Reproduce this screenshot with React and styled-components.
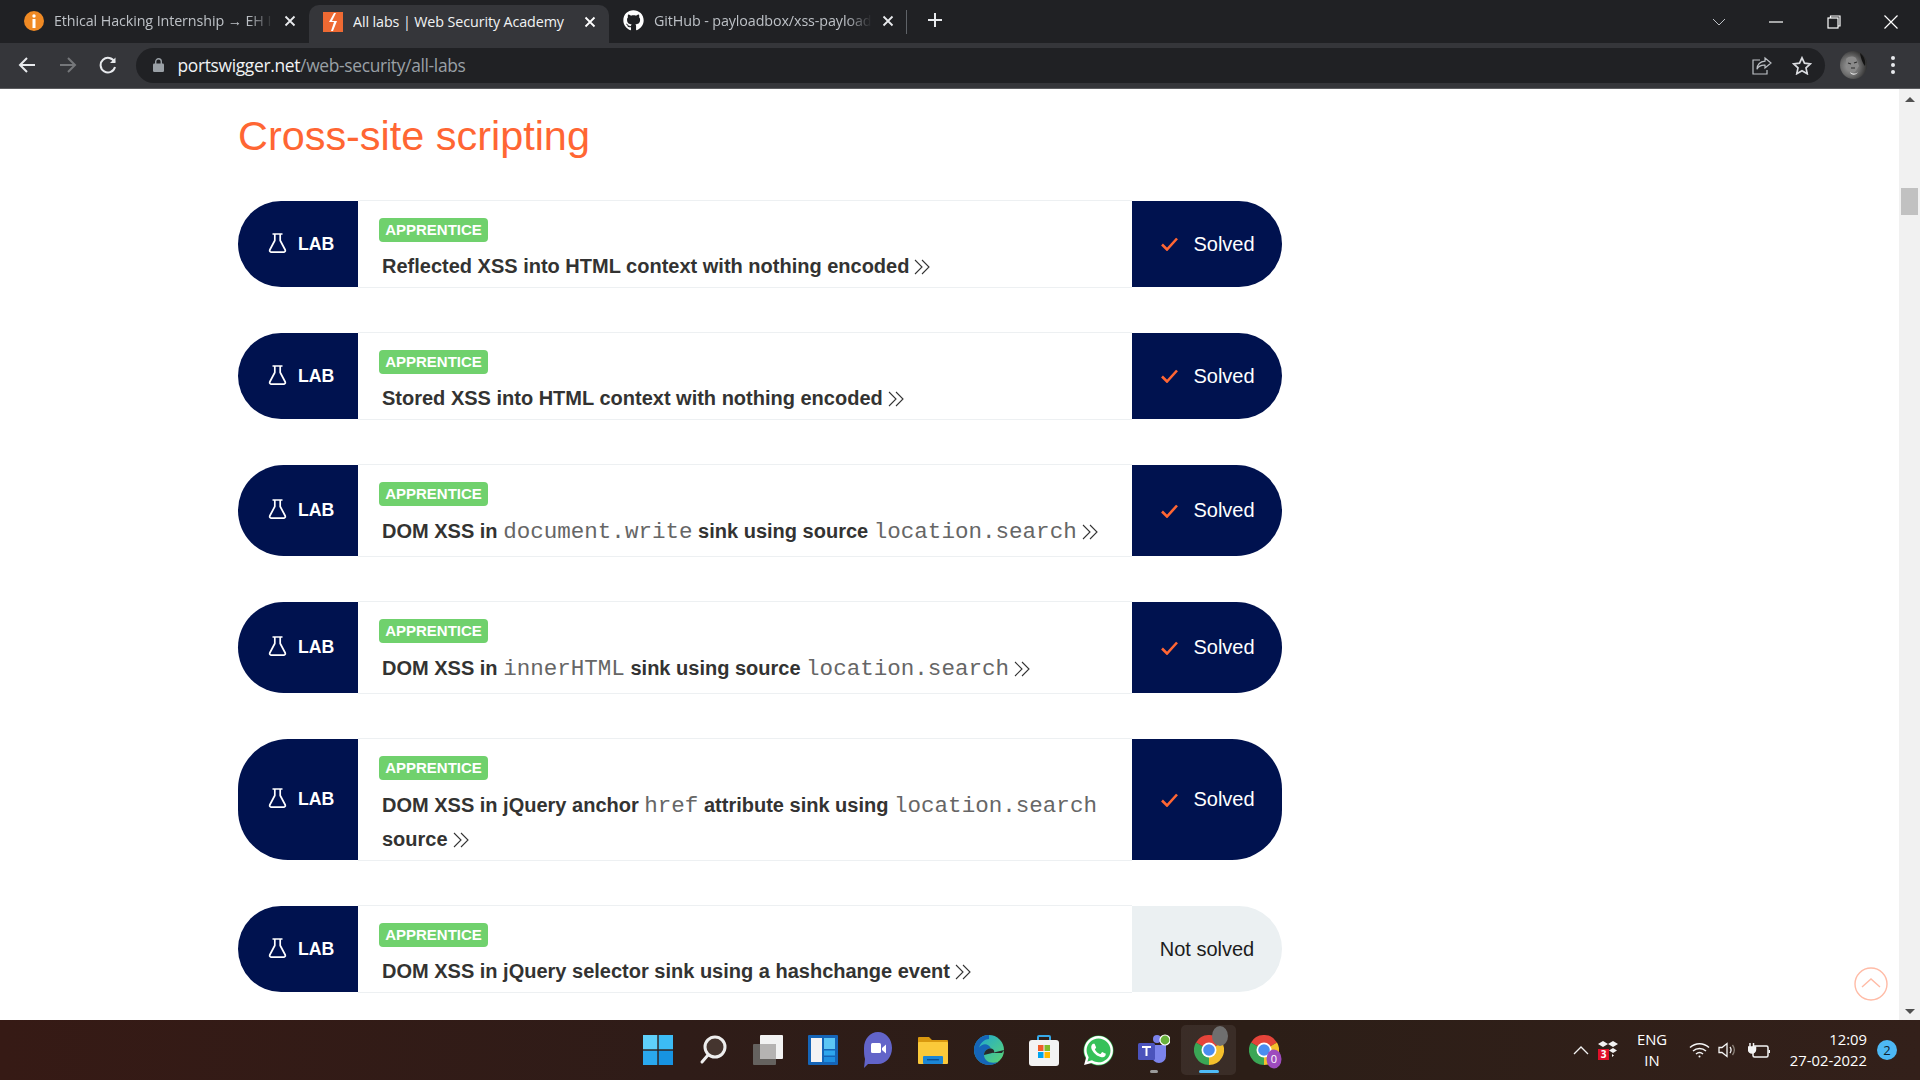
import React from 'react';
import styled, { createGlobalStyle } from 'styled-components';
import { FaGithub, FaWhatsapp } from 'react-icons/fa';

const GlobalStyle = createGlobalStyle`
  html, body { margin: 0; padding: 0; height: 100%; overflow: hidden; background: #fff; }
  body { font-family: "Liberation Sans", Arial, sans-serif; }
  * { box-sizing: border-box; }
`;

const Screen = styled.div`
  width: 1920px;
  height: 1080px;
  display: flex;
  flex-direction: column;
  position: relative;
  overflow: hidden;
`;

/* browser chrome */
const TabStrip = styled.div`
  height: 43px;
  background: #202124;
  display: flex;
  align-items: flex-end;
  padding-left: 12px;
  flex-shrink: 0;
`;

const Tab = styled.div`
  width: ${p => p.$width}px;
  height: ${p => (p.$active ? 38 : 36)}px;
  display: flex;
  align-items: center;
  gap: 10px;
  padding: 0 13px ${p => (p.$active ? 5 : 3)}px 14px;
  margin-bottom: ${p => (p.$active ? 0 : 3)}px;
  background: ${p => (p.$active ? '#35363a' : 'transparent')};
  border-radius: 10px 10px 0 0;
  color: ${p => (p.$active ? '#f1f3f4' : '#bdc1c6')};
  font-family: "Open Sans", sans-serif;
  font-size: 14.3px;
  position: relative;
`;

const TabTitle = styled.span`
  flex: 1;
  white-space: nowrap;
  overflow: hidden;
  letter-spacing: -0.1px;
  ${p => !p.$active && `
    -webkit-mask-image: linear-gradient(90deg, #000 88%, transparent 100%);
    mask-image: linear-gradient(90deg, #000 88%, transparent 100%);
  `}
`;

const TabDivider = styled.span`
  width: 1px;
  height: 24px;
  background: #5f6368;
  margin: 0 0 9px -1px;
`;

const NewTab = styled.span`
  width: 56px;
  height: 36px;
  display: flex;
  align-items: center;
  justify-content: center;
  margin-bottom: 5px;
`;

const WindowControls = styled.div`
  margin-left: auto;
  height: 43px;
  display: flex;
  align-items: center;
`;

const WindowButton = styled.span`
  width: 57.5px;
  height: 36px;
  display: flex;
  align-items: center;
  justify-content: center;
`;

const Toolbar = styled.div`
  height: 46px;
  background: #35363a;
  border-bottom: 1px solid #5b5c5f;
  display: flex;
  align-items: center;
  padding: 0 0 1px 7px;
  flex-shrink: 0;
`;

const NavButton = styled.span`
  width: 40.5px;
  height: 36px;
  display: flex;
  align-items: center;
  justify-content: center;
`;

const UrlBar = styled.div`
  width: 1689px;
  height: 35px;
  margin-left: 7px;
  background: #202124;
  border-radius: 18px;
  display: flex;
  align-items: center;
  padding: 0 3px 0 17px;
`;

const UrlText = styled.span`
  margin-left: 14px;
  font-family: "Open Sans", sans-serif;
  font-size: 17.4px;
  letter-spacing: -0.33px;
  color: #f1f3f4;
  flex: 1;
  b { font-weight: 400; color: #9aa0a6; }
`;

const UrlAction = styled.span`
  width: 40px;
  display: flex;
  justify-content: center;
`;

const AvatarWrap = styled.span`
  width: 27px;
  height: 28px;
  margin-left: 15px;
  display: flex;
`;

const MenuDots = styled.span`
  margin-left: 24px;
  display: flex;
  flex-direction: column;
  gap: 3px;
  i { width: 4px; height: 4px; border-radius: 50%; background: #e8eaed; display: block; }
`;

/* page */
const Viewport = styled.div`
  flex: 1;
  display: flex;
  min-height: 0;
  position: relative;
`;

const Content = styled.main`
  flex: 1;
  padding-left: 238px;
`;

const Column = styled.div`
  width: 1044px;
`;

const Heading = styled.h1`
  margin: 23px 0 39px;
  font-size: 41.4px;
  line-height: 49px;
  font-weight: 400;
  color: #ff6633;
`;

const LabList = styled.div`
  display: flex;
  flex-direction: column;
  gap: 44px;
`;

const Row = styled.div`
  display: flex;
  align-items: stretch;
`;

const LabCell = styled.div`
  width: 120px;
  margin: 1px 0;
  background: #00124f;
  border-radius: 50px 0 0 50px;
  display: flex;
  align-items: center;
  padding-left: 30px;
  gap: 11px;
  color: #fff;
  font-weight: 700;
  font-size: 17.7px;
  flex-shrink: 0;
`;

const FlaskWrap = styled.span`
  display: flex;
  margin-bottom: 3px;
`;

const LabBody = styled.div`
  flex: 1;
  border-top: 1px solid #edf0f2;
  border-bottom: 1px solid #edf0f2;
  padding: 17px 24px 6px 21px;
`;

const Badge = styled.span`
  display: block;
  width: 109px;
  height: 24px;
  border-radius: 4px;
  background: #70d16d;
  color: #fff;
  font-size: 15px;
  font-weight: 700;
  line-height: 24px;
  text-align: center;
`;

const LabTitle = styled.div`
  margin: 9px 0 0 3px;
  font-size: 20px;
  font-weight: 700;
  line-height: 30px;
  color: #333332;
`;

const Code = styled.code`
  display: inline-block;
  padding: 2px 0 3px;
  font-family: "Liberation Mono", monospace;
  font-size: 22.55px;
  font-weight: 400;
  color: #666;
`;

const Status = styled.div`
  width: 150px;
  margin: 1px 0;
  flex-shrink: 0;
  border-radius: 0 50px 50px 0;
  background: ${p => (p.$solved ? '#00124f' : '#ebf0f2')};
  color: ${p => (p.$solved ? '#fff' : '#1c1c1c')};
  display: flex;
  align-items: center;
  justify-content: center;
  gap: 15px;
  font-size: 20px;
  padding-left: ${p => (p.$solved ? 2 : 0)}px;
`;

const Scrollbar = styled.aside`
  width: 21px;
  background: #f1f1f1;
  position: relative;
  display: flex;
  flex-direction: column;
  align-items: center;
  justify-content: space-between;
  padding: 8px 0 6px;
`;

const ScrollThumb = styled.span`
  position: absolute;
  top: 99px;
  left: 2px;
  width: 17px;
  height: 27px;
  background: #c1c1c1;
`;

const Arrow = styled.span`
  width: 0;
  height: 0;
  border-left: 5px solid transparent;
  border-right: 5px solid transparent;
  ${p => (p.$down ? 'border-top: 5px solid #505050;' : 'border-bottom: 5px solid #505050;')}
`;

const BackToTop = styled.span`
  position: absolute;
  right: 32px;
  top: 878px;
  width: 34px;
  height: 34px;
`;

/* taskbar */
const Taskbar = styled.footer`
  height: 60px;
  flex-shrink: 0;
  background: linear-gradient(90deg, #361a15 0%, #2f1c18 35%, #2c1e17 65%, #33201a 100%);
  display: grid;
  grid-template-columns: 1fr auto 1fr;
  align-items: center;
  color: #fff;
  font-family: "Open Sans", sans-serif;
`;

const TaskIcons = styled.div`
  grid-column: 2;
  display: flex;
  align-items: center;
  justify-content: center;
  padding-left: 2px;
`;

const TaskIcon = styled.span`
  width: 55.1px;
  height: 50px;
  display: flex;
  align-items: center;
  justify-content: center;
  border-radius: 5px;
  position: relative;
  background: ${p => (p.$current ? 'rgba(255,255,255,0.07)' : 'transparent')};
  &::after {
    content: '';
    display: ${p => (p.$indicator ? 'block' : 'none')};
    position: absolute;
    bottom: 2px;
    left: 50%;
    transform: translateX(-50%);
    height: 3px;
    border-radius: 2px;
    width: ${p => (p.$indicator === 'active' ? 20 : 8)}px;
    background: ${p => (p.$indicator === 'active' ? '#4fbcf7' : '#9b9b9b')};
  }
`;

const Tray = styled.div`
  grid-column: 3;
  display: flex;
  align-items: center;
  justify-content: flex-end;
  padding-right: 23px;
`;

const TrayItem = styled.span`
  display: flex;
  align-items: center;
  justify-content: center;
  width: ${p => p.$width}px;
  margin-left: ${p => p.$gap || 0}px;
  position: relative;
`;

const DropCount = styled.span`
  position: absolute;
  left: 0;
  top: 9px;
  width: 11px;
  height: 11px;
  background: #e0102a;
  color: #fff;
  font-size: 10px;
  line-height: 11px;
  text-align: center;
  font-weight: 700;
`;

const LangBlock = styled.span`
  width: 50px;
  margin-left: 9px;
  text-align: center;
  font-size: 14.8px;
  line-height: 21px;
`;

const Clock = styled.span`
  width: 88px;
  text-align: right;
  font-size: 14.8px;
  line-height: 21px;
  margin-left: 3px;
`;

const NotifyBadge = styled.span`
  width: 20px;
  height: 20px;
  margin-left: 10px;
  border-radius: 50%;
  background: #4db8f5;
  color: #10202b;
  font-size: 13px;
  line-height: 20px;
  text-align: center;
`;

/* drawings */
const FlaskIcon = () => (
  <svg width="19" height="20" viewBox="0 0 19 20" fill="none" stroke="#fff" strokeWidth="1.7" strokeLinejoin="round">
    <path d="M4.500 1h10M6.800 1v6.500L2 16.500c-.8 1.500 0 2.700 1.600 2.700h11.800c1.600 0 2.400-1.200 1.600-2.700L12.200 7.500V1" />
  </svg>
);

const DoubleChevron = () => (
  <svg width="17" height="16" viewBox="0 0 17 16" fill="none" stroke="#333" strokeWidth="1.1" style={{ marginLeft: 5, verticalAlign: -2 }}>
    <path d="M1 1l7 7-7 7M8 1l7 7-7 7" />
  </svg>
);

const CheckIcon = () => (
  <svg width="17" height="14" viewBox="0 0 17 14" fill="none" stroke="#ff6633" strokeWidth="2.6">
    <path d="M1 7.500l5 5L16 1.500" />
  </svg>
);

const Close = ({ color = '#e8eaed' }) => (
  <svg width="12" height="12" viewBox="0 0 12 12" stroke={color} strokeWidth="1.8" style={{ flexShrink: 0 }}>
    <path d="M1.500 1.500l9 9M10.500 1.500l-9 9" />
  </svg>
);

const InfoFavicon = () => (
  <svg width="20" height="20" viewBox="0 0 20 20" style={{ flexShrink: 0, marginLeft: -2 }}>
    <circle cx="10" cy="10" r="10" fill="#f08a24" />
    <circle cx="10" cy="5" r="1.700" fill="#fff" />
    <rect x="8.500" y="8" width="3" height="9" fill="#fff" />
  </svg>
);

const BoltFavicon = () => (
  <svg width="20" height="20" viewBox="0 0 20 20" style={{ flexShrink: 0 }}>
    <rect width="20" height="20" fill="#ee6a33" />
    <path d="M11 1L6 10h5l-3 9 2 0 4-10H9l4-8z" fill="#fff" />
  </svg>
);

const LionAvatar = () => (
  <svg width="27" height="28" viewBox="0 0 27 28">
    <defs>
      <radialGradient id="lionFur" cx="0.38" cy="0.55" r="0.7">
        <stop offset="0" stopColor="#a2a2a2" />
        <stop offset="0.5" stopColor="#6b6b6b" />
        <stop offset="1" stopColor="#1e1e1e" />
      </radialGradient>
    </defs>
    <ellipse cx="13.500" cy="14" rx="13.500" ry="14" fill="url(#lionFur)" />
    <path d="M20 2c4 3 6 8 5 13-2-2-4-7-5-13z" fill="#141414" />
    <path d="M6 8c3-3 7-3 10-1l3 8-4 6c-3 1-6 0-8-3z" fill="#8a8a8a" />
    <path d="M10 21c3 2 6 2 8 0-1 3-7 4-8 0z" fill="#e6e6e6" />
    <path d="M8 12l3 1M14 12l3-1M11 17h4" stroke="#2c2c2c" strokeWidth="1.200" fill="none" />
  </svg>
);

const ChromeIcon = ({ size = 30, children }) => (
  <span style={{ position: 'relative', display: 'inline-flex' }}>
    <svg width={size} height={size} viewBox="0 0 30 30">
      <path d="M15 15L2 7.500A15 15 0 0 1 28 7.500z" fill="#e5443a" />
      <path d="M15 15L28 7.500A15 15 0 0 1 15 30z" fill="#f5c02c" />
      <path d="M15 15L15 30A15 15 0 0 1 2 7.500z" fill="#3aa655" />
      <circle cx="15" cy="15" r="7.500" fill="#fff" />
      <circle cx="15" cy="15" r="5.800" fill="#4b8df0" />
    </svg>
    {children}
  </span>
);

const labs = [
  { title: ['Reflected XSS into HTML context with nothing encoded'], solved: true },
  { title: ['Stored XSS into HTML context with nothing encoded'], solved: true },
  { title: ['DOM XSS in ', { code: 'document.write' }, ' sink using source ', { code: 'location.search' }], solved: true },
  { title: ['DOM XSS in ', { code: 'innerHTML' }, ' sink using source ', { code: 'location.search' }], solved: true },
  { title: ['DOM XSS in jQuery anchor ', { code: 'href' }, ' attribute sink using ', { code: 'location.search' }, ' source'], solved: true },
  { title: ['DOM XSS in jQuery selector sink using a hashchange event'], solved: false },
];

const LabRow = ({ lab }) => (
  <Row>
    <LabCell>
      <FlaskWrap>
        <FlaskIcon />
      </FlaskWrap>
      <span>LAB</span>
    </LabCell>
    <LabBody>
      <Badge>APPRENTICE</Badge>
      <LabTitle>
        {lab.title.map((part, i) =>
          typeof part === 'string' ? <span key={i}>{part}</span> : <Code key={i}>{part.code}</Code>
        )}
        <DoubleChevron />
      </LabTitle>
    </LabBody>
    <Status $solved={lab.solved}>
      {lab.solved && <CheckIcon />}
      <span>{lab.solved ? 'Solved' : 'Not solved'}</span>
    </Status>
  </Row>
);

export default function App() {
  return (
    <Screen>
      <GlobalStyle />
      <TabStrip>
        <Tab $width={297}>
          <InfoFavicon />
          <TabTitle>Ethical Hacking Internship → EH I</TabTitle>
          <Close />
        </Tab>
        <Tab $width={300} $active>
          <BoltFavicon />
          <TabTitle $active>All labs | Web Security Academy</TabTitle>
          <Close color="#fff" />
        </Tab>
        <Tab $width={298}>
          <FaGithub size={21} color="#fff" style={{ flexShrink: 0 }} />
          <TabTitle>GitHub - payloadbox/xss-payload-list</TabTitle>
          <Close />
        </Tab>
        <TabDivider />
        <NewTab>
          <svg width="16" height="16" viewBox="0 0 16 16" stroke="#e8eaed" strokeWidth="2">
            <path d="M8 1v14M1 8h14" />
          </svg>
        </NewTab>
        <WindowControls>
          <WindowButton>
            <svg width="14" height="8" viewBox="0 0 14 8" fill="none" stroke="#bdc1c6" strokeWidth="1">
              <path d="M1 1l6 6 6-6" />
            </svg>
          </WindowButton>
          <WindowButton>
            <svg width="14" height="2" viewBox="0 0 14 2" stroke="#fff" strokeWidth="1.200">
              <path d="M0 1h14" />
            </svg>
          </WindowButton>
          <WindowButton>
            <svg width="14" height="14" viewBox="0 0 14 14" fill="none" stroke="#fff" strokeWidth="1.200">
              <rect x="1" y="3" width="10" height="10" />
              <path d="M3.500 3V1H13v10h-2" />
            </svg>
          </WindowButton>
          <WindowButton>
            <svg width="14" height="14" viewBox="0 0 14 14" stroke="#fff" strokeWidth="1.200">
              <path d="M0.500 0.500l13 13M13.500 0.500l-13 13" />
            </svg>
          </WindowButton>
        </WindowControls>
      </TabStrip>
      <Toolbar>
        <NavButton>
          <svg width="18" height="18" viewBox="0 0 18 18" fill="none" stroke="#e8eaed" strokeWidth="2">
            <path d="M17 9H2M9 2L2 9l7 7" />
          </svg>
        </NavButton>
        <NavButton>
          <svg width="18" height="18" viewBox="0 0 18 18" fill="none" stroke="#75777a" strokeWidth="2">
            <path d="M1 9h15M9 2l7 7-7 7" />
          </svg>
        </NavButton>
        <NavButton>
          <svg width="18" height="18" viewBox="0 0 18 18" fill="none" stroke="#e8eaed" strokeWidth="2">
            <path d="M15.500 6A7.300 7.300 0 1 0 16 11" />
            <path d="M16.500 1.500V7H11" fill="#e8eaed" stroke="none" />
          </svg>
        </NavButton>
        <UrlBar>
          <svg width="11" height="14" viewBox="0 0 11 14">
            <rect y="5.500" width="11" height="8.500" rx="1.200" fill="#9aa0a6" />
            <path d="M2.700 6V3.600a2.800 2.800 0 0 1 5.600 0V6" fill="none" stroke="#9aa0a6" strokeWidth="1.400" />
          </svg>
          <UrlText>
            portswigger.net<b>/web-security/all-labs</b>
          </UrlText>
          <UrlAction>
            <svg width="20" height="19" viewBox="0 0 20 19" fill="none" stroke="#bdc1c6" strokeWidth="1.200">
              <path d="M13 2l6 5-6 5V9.200c-4-.2-6.500 1-8 4 .3-4.600 3-7.600 8-8z" />
              <path d="M8 4H1v14h14v-4" />
            </svg>
          </UrlAction>
          <UrlAction>
            <svg width="20" height="19" viewBox="0 0 20 19" fill="none" stroke="#dadce0" strokeWidth="1.700">
              <path d="M10 1.800l2.500 5.400 5.800.7-4.300 4 1.200 5.800-5.200-3-5.200 3 1.200-5.800-4.300-4 5.800-.7z" />
            </svg>
          </UrlAction>
        </UrlBar>
        <AvatarWrap>
          <LionAvatar />
        </AvatarWrap>
        <MenuDots>
          <i />
          <i />
          <i />
        </MenuDots>
      </Toolbar>
      <Viewport>
        <Content>
          <Column>
            <Heading>Cross-site scripting</Heading>
            <LabList>
              {labs.map((lab, i) => (
                <LabRow key={i} lab={lab} />
              ))}
            </LabList>
          </Column>
        </Content>
        <Scrollbar>
          <Arrow />
          <ScrollThumb />
          <Arrow $down />
        </Scrollbar>
        <BackToTop>
          <svg width="34" height="34" viewBox="0 0 34 34" fill="none" stroke="#ffbba6" strokeWidth="1.400">
            <circle cx="17" cy="17" r="16" />
            <path d="M8 20l9-8 9 8" />
          </svg>
        </BackToTop>
      </Viewport>
      <Taskbar>
        <TaskIcons>
          <TaskIcon>
            <svg width="30" height="30" viewBox="0 0 30 30">
              <rect width="14.300" height="14.300" fill="#5fd0fa" />
              <rect x="15.700" width="14.300" height="14.300" fill="#3cbcf5" />
              <rect y="15.700" width="14.300" height="14.300" fill="#2aa8ee" />
              <rect x="15.700" y="15.700" width="14.300" height="14.300" fill="#1793e2" />
            </svg>
          </TaskIcon>
          <TaskIcon>
            <svg width="28" height="30" viewBox="0 0 28 30" fill="none" stroke="#eee" strokeWidth="3">
              <circle cx="16" cy="12" r="10" fill="#45352f" />
              <path d="M9 20l-6 7" strokeLinecap="round" />
            </svg>
          </TaskIcon>
          <TaskIcon>
            <svg width="30" height="30" viewBox="0 0 30 30">
              <rect x="7" y="0" width="23" height="24" rx="1" fill="#f2f2f2" />
              <rect x="0" y="9" width="23" height="21" rx="1" fill="#6a6866" fillOpacity="0.92" />
              <rect x="7" y="9" width="16" height="15" fill="#b5b3b2" />
            </svg>
          </TaskIcon>
          <TaskIcon>
            <svg width="30" height="30" viewBox="0 0 30 30">
              <rect width="30" height="30" rx="1" fill="#1565b8" />
              <rect x="3" y="3" width="11" height="24" fill="#f4f4f4" />
              <rect x="16" y="3" width="11" height="11" fill="#5cc6f5" />
              <rect x="16" y="15.500" width="11" height="5" fill="#2ea7ee" />
              <rect x="16" y="22" width="11" height="5" fill="#1e8fe0" />
            </svg>
          </TaskIcon>
          <TaskIcon>
            <svg width="30" height="36" viewBox="0 0 30 36">
              <path d="M15 0c8 0 14 7 14 16s-6 16-14 16H5l-4 4 1-9C1 24 1 20 1 16 1 7 7 0 15 0z" fill="#6264c9" />
              <rect x="8" y="11" width="10" height="10" rx="1.500" fill="#fff" />
              <path d="M19 16l4-3.500v9L19 18z" fill="#fff" />
            </svg>
          </TaskIcon>
          <TaskIcon>
            <svg width="30" height="28" viewBox="0 0 30 28">
              <path d="M0 2a1 1 0 0 1 1-1h10l3 3h15a1 1 0 0 1 1 1v4H0z" fill="#d9980f" />
              <rect y="6" width="30" height="22" rx="1" fill="#fbc93a" />
              <rect x="5" y="20" width="20" height="8" rx="1" fill="#1b86d6" />
              <rect x="9" y="23" width="12" height="1.400" fill="#0b4f91" />
            </svg>
          </TaskIcon>
          <TaskIcon>
            <svg width="30" height="30" viewBox="0 0 30 30">
              <defs>
                <linearGradient id="edgeTop" x1="0" y1="0" x2="1" y2="1">
                  <stop offset="0" stopColor="#1aa5d8" />
                  <stop offset="1" stopColor="#5ed66f" />
                </linearGradient>
              </defs>
              <circle cx="15" cy="15" r="15" fill="url(#edgeTop)" />
              <path d="M15 0C6.700 0 0 6.700 0 15c0 8.300 6.700 15 15 15 3.500 0 6.500-1.200 9-3-8 2.500-14-1.500-14-7 0-4.500 4-7 7-6.500-3-6-9-5-12-1C7 7 11 4 15 4z" fill="#1565b8" />
              <path d="M10 20c0-4.500 4-7 7-6.500 3 .5 4 3 2.500 4.500h8.500c1-2 2-2 2-3" fill="#28292a" />
            </svg>
          </TaskIcon>
          <TaskIcon>
            <svg width="30" height="32" viewBox="0 0 30 32">
              <path d="M9 7V3a1 1 0 0 1 1-1h10a1 1 0 0 1 1 1v4" fill="none" stroke="#37a9e8" strokeWidth="2" />
              <rect y="6" width="30" height="26" rx="3" fill="#f3f3f3" />
              <rect x="9" y="11" width="5.500" height="6" fill="#ef5c2b" />
              <rect x="15.500" y="11" width="5.500" height="6" fill="#7fba2a" />
              <rect x="9" y="18" width="5.500" height="6" fill="#00a4ef" />
              <rect x="15.500" y="18" width="5.500" height="6" fill="#ffb900" />
            </svg>
          </TaskIcon>
          <TaskIcon>
            <FaWhatsapp size={33} color="#fff" style={{ background: 'radial-gradient(circle, #35c15a 62%, transparent 66%)' }} />
          </TaskIcon>
          <TaskIcon $indicator="open">
            <svg width="32" height="32" viewBox="0 0 32 32">
              <circle cx="19" cy="5" r="4" fill="#7b83eb" />
              <path d="M13 11h15v11a7 7 0 0 1-14 0z" fill="#7b83eb" />
              <rect x="0" y="9" width="17" height="17" rx="1.500" fill="#4b53bc" />
              <path d="M4 13h9M8.500 13v9" stroke="#fff" strokeWidth="2" />
              <circle cx="27" cy="6" r="5" fill="#69b23c" stroke="#fff" strokeWidth="1.200" />
            </svg>
          </TaskIcon>
          <TaskIcon $current $indicator="active">
            <ChromeIcon>
              <svg width="16" height="20" viewBox="0 0 16 20" style={{ position: 'absolute', right: -4, top: -9 }}>
                <ellipse cx="8" cy="10" rx="8" ry="10" fill="#6f6f6f" />
              </svg>
            </ChromeIcon>
          </TaskIcon>
          <TaskIcon>
            <ChromeIcon>
              <svg width="16" height="20" viewBox="0 0 16 20" style={{ position: 'absolute', right: -3, bottom: -4 }}>
                <ellipse cx="8" cy="10" rx="7.500" ry="9.500" fill="#9d4bbd" />
                <text x="8" y="14" fontSize="11" fontFamily="Open Sans" textAnchor="middle" fill="#fff">0</text>
              </svg>
            </ChromeIcon>
          </TaskIcon>
        </TaskIcons>
        <Tray>
          <TrayItem $width={28}>
            <svg width="16" height="9" viewBox="0 0 16 9" fill="none" stroke="#f2f2f2" strokeWidth="1.300">
              <path d="M1 8l7-7 7 7" />
            </svg>
          </TrayItem>
          <TrayItem $width={20} $gap={3}>
            <svg width="20" height="20" viewBox="0 0 20 20" fill="#f2f2f2">
              <path d="M5 1l5 3-5 3-5-3zM15 1l5 3-5 3-5-3zM15 8l4 2.500-4 2.500-4-2.500zM14 14l2 1.500-2 1.500z" />
            </svg>
            <DropCount>3</DropCount>
          </TrayItem>
          <LangBlock>
            ENG
            <br />
            IN
          </LangBlock>
          <TrayItem $width={30} $gap={7}>
            <svg width="21" height="16" viewBox="0 0 21 16" fill="none" stroke="#f5f5f5" strokeWidth="1.500">
              <path d="M1 5.500c5.500-5 13.500-5 19 0M4 9c3.800-3.300 9.200-3.300 13 0M7 12c2-1.600 5-1.600 7 0" />
              <circle cx="10.500" cy="14.500" r="1" fill="#f5f5f5" stroke="none" />
            </svg>
          </TrayItem>
          <TrayItem $width={28}>
            <svg width="20" height="16" viewBox="0 0 20 16" fill="none" stroke="#f5f5f5" strokeWidth="1.300">
              <path d="M1 5.500h3l5-4v13l-5-4H1z" />
              <path d="M12 5c1.300 1.800 1.300 4.200 0 6" />
              <path d="M14.500 3c2.200 3 2.200 7 0 10" stroke="#8a8078" />
            </svg>
          </TrayItem>
          <TrayItem $width={34}>
            <svg width="22" height="17" viewBox="0 0 22 17" fill="none" stroke="#f5f5f5" strokeWidth="1.500">
              <rect x="5" y="4" width="15" height="11" rx="1.500" />
              <path d="M21.300 8v3M2 1v4M5.500 1v4" />
              <path d="M0.500 5h7v2.500a3.500 3.500 0 0 1-7 0z" fill="#f5f5f5" />
            </svg>
          </TrayItem>
          <Clock>
            12:09
            <br />
            27-02-2022
          </Clock>
          <NotifyBadge>2</NotifyBadge>
        </Tray>
      </Taskbar>
    </Screen>
  );
}
